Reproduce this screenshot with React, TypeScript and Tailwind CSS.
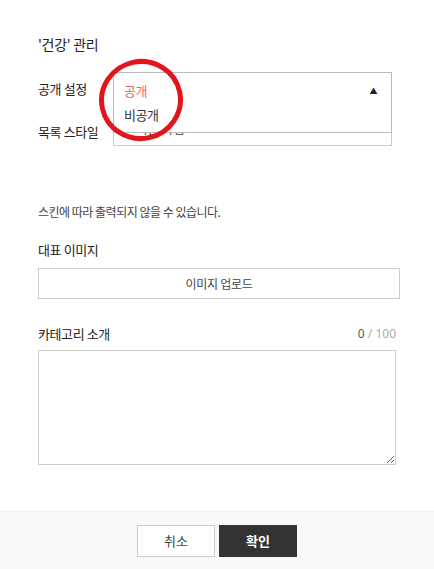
import React from "react";

export default function App() {
  const font = { fontFamily: '"Noto Sans CJK KR", "Noto Sans", sans-serif' };
  return (
    <div className="relative w-[434px] h-[569px] bg-white flex flex-col text-[#222]" style={font}>
      <div className="flex-1 flex flex-col pl-[38px] pr-[34px] pt-[34px]">
        <div className="text-[14px] leading-[20px] tracking-[-0.3px]">'건강' 관리</div>

        <div className="mt-[18px] flex flex-col gap-[8px]">
          <div className="flex items-center relative">
            <div className="w-[75px] text-[13px] tracking-[-0.4px]">공개 설정</div>
            <div className="w-[279px] h-[33px] border border-[#ccc] bg-white"></div>
            <div className="absolute left-[75px] top-0 w-[279px] h-[61px] border border-[#bbb] bg-white z-10 flex flex-col pl-[10px] pr-[12px] pt-[8px] text-[13px] tracking-[-0.4px]">
              <div className="flex items-center justify-between h-[20px]">
                <span className="text-[#e8685a]">공개</span>
                <span className="text-[8px] text-[#222] mr-[2px]">▲</span>
              </div>
              <div className="h-[24px] flex items-center mt-[2px] text-[#333]">비공개</div>
            </div>
          </div>
          <div className="flex items-center">
            <div className="w-[75px] text-[13px] tracking-[-0.4px] mt-[4px]">목록 스타일</div>
            <div className="w-[279px] h-[33px] border border-[#ccc] bg-white flex items-center justify-between px-[12px] text-[12.5px] text-[#444]">
              <span className="ml-[10px]">기본 타입</span>
              <span className="text-[7px] text-[#888]">▼</span>
            </div>
          </div>
        </div>

        <div className="mt-[57px] text-[12px] tracking-[-0.5px] text-[#444] leading-[18px]">
          스킨에 따라 출력되지 않을 수 있습니다.
        </div>

        <div className="mt-[20px] text-[13px] tracking-[-0.4px] leading-[18px]">대표 이미지</div>
        <button className="mt-[9px] w-[362px] h-[31px] border border-[#ccc] bg-white text-[12px] tracking-[-0.3px] text-[#444]">
          이미지 업로드
        </button>

        <div className="mt-[26px] w-[358px] flex items-center justify-between leading-[18px]">
          <span className="text-[13px] tracking-[-0.4px]">카테고리 소개</span>
          <span className="text-[12px]" style={{ fontFamily: '"Noto Sans", sans-serif' }}>
            <span className="text-[#555]">0</span>
            <span className="text-[#aaa]"> / 100</span>
          </span>
        </div>
        <textarea className="mt-[7px] w-[358px] h-[115px] border border-[#ccc] bg-white resize-y outline-none" />
      </div>

      <div className="h-[58px] bg-[#f8f9fb] border-t border-[#eef0f3] flex items-center justify-center gap-[4px]">
        <button className="w-[78px] h-[32px] bg-white border border-[#ccc] text-[13px] text-[#444]">취소</button>
        <button className="w-[78px] h-[32px] bg-[#333] text-white text-[13px] font-bold">확인</button>
      </div>

      <svg className="absolute left-[97px] top-[56px] pointer-events-none z-20" width="90" height="90" viewBox="0 0 90 90">
        <ellipse cx="44" cy="44" rx="39.5" ry="38.5" fill="none" stroke="#e3141c" strokeWidth="5" transform="rotate(-12 44 44)" />
      </svg>
    </div>
  );
}
